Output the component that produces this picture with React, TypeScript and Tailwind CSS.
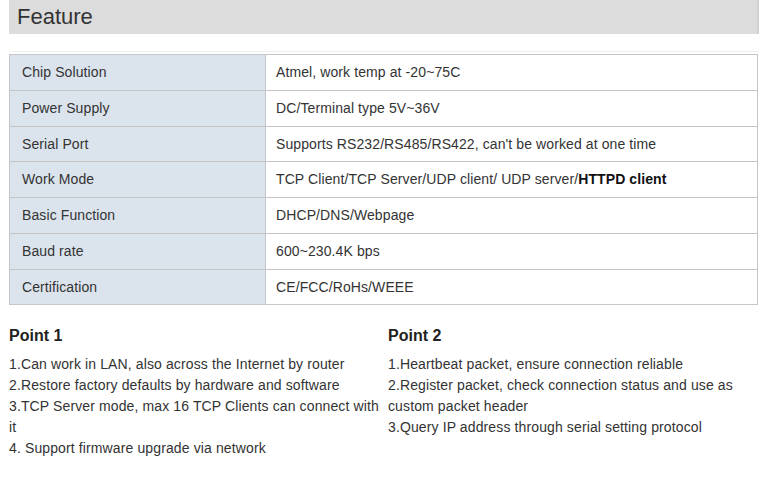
const ROWS: { label: string; value: React.ReactNode; h: string }[] = [
  { label: "Chip Solution", value: "Atmel, work temp at -20~75C", h: "h-[36px]" },
  { label: "Power Supply", value: "DC/Terminal type 5V~36V", h: "h-[36px]" },
  { label: "Serial Port", value: "Supports RS232/RS485/RS422, can't be worked at one time", h: "h-[35px]" },
  {
    label: "Work Mode",
    value: (
      <>
        TCP Client/TCP Server/UDP client/ UDP server/<b className="font-bold text-[#111]">HTTPD client</b>
      </>
    ),
    h: "h-[36px]",
  },
  { label: "Basic Function", value: "DHCP/DNS/Webpage", h: "h-[36px]" },
  { label: "Baud rate", value: "600~230.4K bps", h: "h-[36px]" },
  { label: "Certification", value: "CE/FCC/RoHs/WEEE", h: "h-[35px]" },
];

const POINT1 = [
  "1.Can work in LAN, also across the Internet by router",
  "2.Restore factory defaults by hardware and software",
  "3.TCP Server mode, max 16 TCP Clients can connect with it",
  "4. Support firmware upgrade via network",
];

const POINT2 = [
  "1.Heartbeat packet, ensure connection reliable",
  "2.Register packet, check connection status and use as custom packet header",
  "3.Query IP address through serial setting protocol",
];

function Point({ title, items }: { title: string; items: string[] }) {
  return (
    <div>
      <h3 className="text-[16px] font-bold leading-[20px] text-[#222]">{title}</h3>
      <ul className="mt-[8px] text-[14px] leading-[21px] tracking-[0.12px] text-[#333]">
        {items.map(t => (
          <li key={t}>{t}</li>
        ))}
      </ul>
    </div>
  );
}

export default function App() {
  return (
    <div className="w-[769px] h-[497px] bg-white font-['Liberation_Sans',Arial,sans-serif] text-[#333]">
      <div className="ml-[9px] w-[750px]">
        {/* Title bar */}
        <div className="h-[34px] bg-[#dcdcdc] pl-[8px] border-r-2 border-[#d2d2d2]">
          <h2 className="text-[22px] leading-[34px] text-[#333]">Feature</h2>
        </div>

        {/* Spec table */}
        <div className="mt-[17px] border-t border-[#f0f0f0] pt-[2px]">
          <table className="w-[749px] border-collapse border border-[#c6c6c6] text-[14px] tracking-[0.1px]">
            <tbody>
              {ROWS.map(r => (
                <tr key={r.label} className={r.h}>
                  <td className="w-[256px] border border-[#c6c6c6] bg-[#dbe3ed] px-[12px] py-0">{r.label}</td>
                  <td className="border border-[#c6c6c6] px-[10px] py-0">{r.value}</td>
                </tr>
              ))}
            </tbody>
          </table>
        </div>

        {/* Points */}
        <div className="mt-[21px] flex">
          <div className="w-[375px] mr-[4px]">
            <Point title="Point 1" items={POINT1} />
          </div>
          <div className="w-[362px]">
            <Point title="Point 2" items={POINT2} />
          </div>
        </div>
      </div>
    </div>
  );
}
